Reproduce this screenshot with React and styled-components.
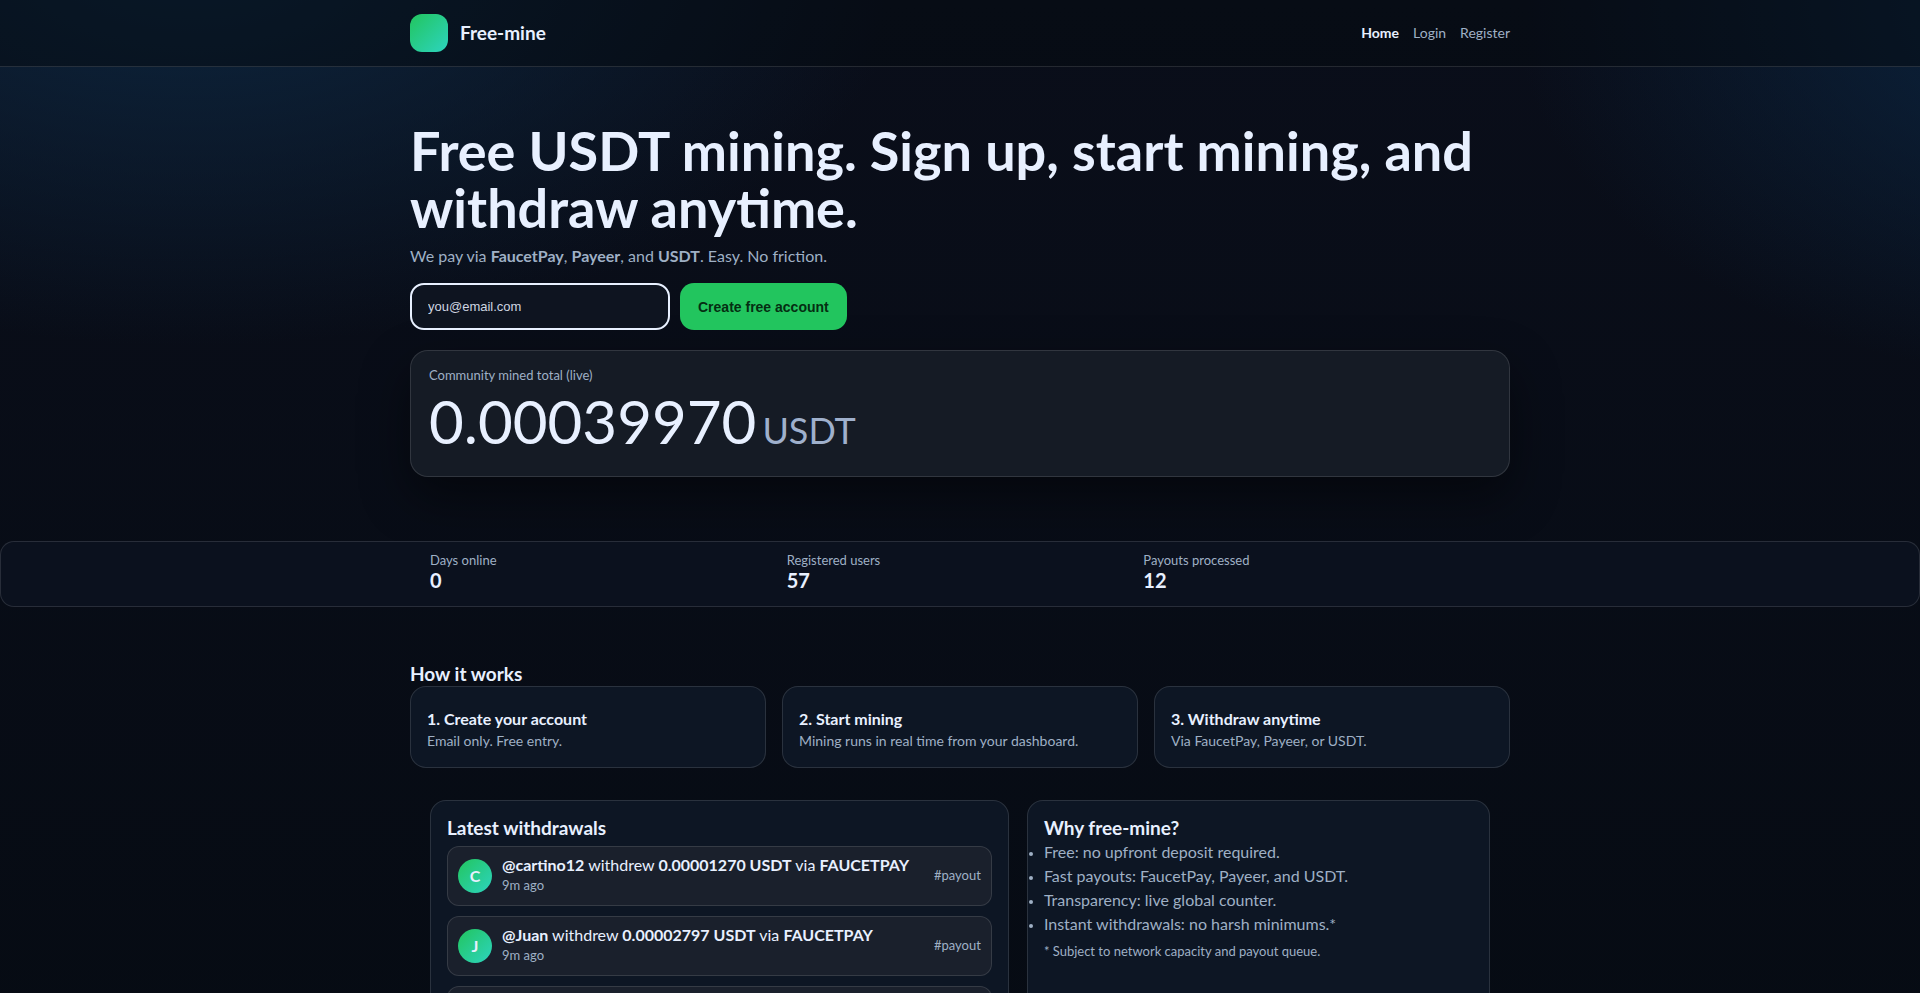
import React from "react";
import styled, { createGlobalStyle } from "styled-components";

const GlobalStyle = createGlobalStyle`
  *, *::before, *::after { box-sizing: border-box; }
  html { background: #060a12; }
  body {
    margin: 0;
    min-height: 100vh;
    font-family: Lato, "Liberation Sans", sans-serif;
    font-size: 16px;
    line-height: 24px;
    color: #e8f0ff;
    background:
      radial-gradient(1200px 660px at 10% -50px, #0d263f 0%, transparent 60%),
      radial-gradient(1000px 640px at 110% 0, #0b2642 0%, transparent 60%),
      linear-gradient(180deg, #0a0e1a 0%, #060b13 100%);
  }
  h1, h2, h3, p, ul, dl, dd { margin: 0; }
`;

const line = "rgba(255, 255, 255, 0.12)";
const muted = "#9fb0c5";

const Container = styled.div`
  width: 100%;
  max-width: 1100px;
  margin: 0 auto;
  padding: 0 ${(p) => (p.$inset ? "20px" : "0")};
`;

const Header = styled.header`
  border-bottom: 1px solid ${line};
  background: rgba(4, 10, 16, 0.5);
`;

const HeaderRow = styled(Container)`
  display: flex;
  align-items: center;
  justify-content: space-between;
  padding: 14px 0;
`;

const Brand = styled.a`
  display: flex;
  align-items: center;
  gap: 12px;
  color: inherit;
  font-size: 19px;
  font-weight: 700;
  text-decoration: none;
`;

const LogoTile = styled.span`
  width: 38px;
  height: 38px;
  border-radius: 12px;
  background: linear-gradient(135deg, #22c55e, #2dd4bf);
`;

const Nav = styled.nav`
  display: flex;
  gap: 14px;
`;

const NavLink = styled.a`
  color: ${(p) => (p.$active ? "#e8f0ff" : muted)};
  font-size: 14px;
  font-weight: ${(p) => (p.$active ? 700 : 400)};
  text-decoration: none;
`;

const Hero = styled(Container).attrs({ as: "section" })`
  padding: 55px 0 64px;
`;

const Title = styled.h1`
  font-size: 54px;
  line-height: 57px;
  font-weight: 700;
`;

const Lead = styled.p`
  margin-top: 8px;
  color: ${muted};
`;

const SignupForm = styled.form`
  display: flex;
  flex-wrap: wrap;
  gap: 10px;
  margin-top: 15px;
`;

const EmailInput = styled.input`
  width: 260px;
  height: 47px;
  padding: 0 16px;
  border: 2px solid #e8f0ff;
  border-radius: 14px;
  outline: none;
  background: #0e1420;
  color: #e8f0ff;
  font: 13px "Liberation Sans", sans-serif;
  &::placeholder { color: #cfd6e2; opacity: 1; }
`;

const PrimaryButton = styled.button`
  height: 47px;
  padding: 0 18px;
  border: 0;
  border-radius: 14px;
  background: #22c55e;
  color: #052e12;
  font: 700 14px "Liberation Sans", sans-serif;
`;

const Counter = styled.section`
  margin-top: 20px;
  padding: 14px 18px 19px;
  border: 1px solid ${line};
  border-radius: 18px;
  background: #151b25;
  box-shadow: 0 20px 50px rgba(0, 0, 0, 0.45);
`;

const Label = styled.div`
  color: ${muted};
  font-size: 13px;
  line-height: 20px;
`;

const CounterValue = styled.div`
  font-size: 60px;
  line-height: 72px;
`;

const Unit = styled.span`
  margin-left: 6px;
  color: #9fb0cc;
  font-size: 36px;
  line-height: 36px;
`;

const StatsBar = styled.section`
  padding: 8px 0 15px;
  border: 1px solid ${line};
  border-radius: 14px;
  background: #0b111e;
`;

const StatsGrid = styled(Container).attrs({ as: "dl" })`
  display: grid;
  grid-template-columns: repeat(3, 1fr);
  gap: 10px;
`;

const StatLabel = styled(Label).attrs({ as: "dt" })``;

const StatValue = styled.dd`
  font-size: 20px;
  line-height: 21px;
  font-weight: 700;
`;

const SectionTitle = styled.h2`
  font-size: 19px;
  line-height: 25px;
  font-weight: 700;
`;

const Steps = styled(Container).attrs({ as: "section" })`
  padding: 54px 0 32px;
`;

const StepGrid = styled.div`
  display: grid;
  grid-template-columns: repeat(3, 1fr);
  gap: 16px;
`;

const Card = styled.article`
  padding: ${(p) => (p.$step ? "20px 16px 16px" : "14px 16px")};
  border: 1px solid ${line};
  border-radius: 16px;
  background: #0d1624;
`;

const StepTitle = styled.h3`
  font-size: 16px;
  line-height: 24px;
  font-weight: 700;
`;

const StepText = styled.p`
  color: ${muted};
  font-size: 14px;
  line-height: 20px;
`;

const Columns = styled(Container)`
  display: grid;
  grid-template-columns: 5fr 4fr;
  gap: 18px;
  padding-bottom: 40px;
`;

const Feed = styled.div`
  display: grid;
  gap: 10px;
  margin-top: 6px;
`;

const FeedItem = styled.div`
  display: flex;
  align-items: center;
  gap: 10px;
  height: 60px;
  padding: 0 10px;
  border: 1px solid ${line};
  border-radius: 12px;
  background: #1a202c;
`;

const Avatar = styled.span`
  display: grid;
  place-items: center;
  flex: none;
  width: 34px;
  height: 34px;
  border-radius: 50%;
  background: linear-gradient(135deg, #22c55e, #2dd4bf);
  font-weight: 700;
`;

const FeedBody = styled.div`
  flex: 1;
  padding-bottom: 3px;
  line-height: 20px;
`;

const FeedTag = styled(Label)`
  padding-bottom: 3px;
`;

const Bullets = styled.ul`
  padding: 0;
  color: ${muted};
  li::marker { font-size: 13px; }
`;

const Note = styled.p`
  margin-top: 5px;
  color: ${muted};
  font-size: 13px;
  line-height: 20px;
`;

const stats = [
  ["Days online", "0"],
  ["Registered users", "57"],
  ["Payouts processed", "12"],
];

const steps = [
  ["1. Create your account", "Email only. Free entry."],
  ["2. Start mining", "Mining runs in real time from your dashboard."],
  ["3. Withdraw anytime", "Via FaucetPay, Payeer, or USDT."],
];

const payouts = [
  { user: "cartino12", amount: "0.00001270" },
  { user: "Juan", amount: "0.00002797" },
  { user: "Juan", amount: "0.00001270" },
];

const reasons = [
  "Free: no upfront deposit required.",
  "Fast payouts: FaucetPay, Payeer, and USDT.",
  "Transparency: live global counter.",
  "Instant withdrawals: no harsh minimums.*",
];

export default function App() {
  return (
    <>
      <GlobalStyle />
      <Header>
        <HeaderRow>
          <Brand href="#"><LogoTile />Free-mine</Brand>
          <Nav>
            <NavLink href="#" $active>Home</NavLink>
            <NavLink href="#login">Login</NavLink>
            <NavLink href="#register">Register</NavLink>
          </Nav>
        </HeaderRow>
      </Header>
      <main>
        <Hero>
          <Title>Free USDT mining. Sign up, start mining, and withdraw anytime.</Title>
          <Lead>We pay via <b>FaucetPay</b>, <b>Payeer</b>, and <b>USDT</b>. Easy. No friction.</Lead>
          <SignupForm onSubmit={(e) => e.preventDefault()}>
            <EmailInput type="email" placeholder="you@email.com" aria-label="Email" />
            <PrimaryButton type="submit">Create free account</PrimaryButton>
          </SignupForm>
          <Counter>
            <Label>Community mined total (live)</Label>
            <CounterValue>0.00039970<Unit>USDT</Unit></CounterValue>
          </Counter>
        </Hero>
        <StatsBar>
          <StatsGrid $inset>
            {stats.map(([label, value]) => (
              <div key={label}>
                <StatLabel>{label}</StatLabel>
                <StatValue>{value}</StatValue>
              </div>
            ))}
          </StatsGrid>
        </StatsBar>
        <Steps>
          <SectionTitle>How it works</SectionTitle>
          <StepGrid>
            {steps.map(([title, text]) => (
              <Card key={title} $step>
                <StepTitle>{title}</StepTitle>
                <StepText>{text}</StepText>
              </Card>
            ))}
          </StepGrid>
        </Steps>
        <Columns $inset>
          <Card>
            <SectionTitle>Latest withdrawals</SectionTitle>
            <Feed>
              {payouts.map((p, i) => (
                <FeedItem key={i}>
                  <Avatar>{p.user[0].toUpperCase()}</Avatar>
                  <FeedBody>
                    <div><b>@{p.user}</b> withdrew <b>{p.amount} USDT</b> via <b>FAUCETPAY</b></div>
                    <Label>9m ago</Label>
                  </FeedBody>
                  <FeedTag>#payout</FeedTag>
                </FeedItem>
              ))}
            </Feed>
          </Card>
          <Card>
            <SectionTitle>Why free-mine?</SectionTitle>
            <Bullets>
              {reasons.map((r) => <li key={r}>{r}</li>)}
            </Bullets>
            <Note>* Subject to network capacity and payout queue.</Note>
          </Card>
        </Columns>
      </main>
    </>
  );
}
